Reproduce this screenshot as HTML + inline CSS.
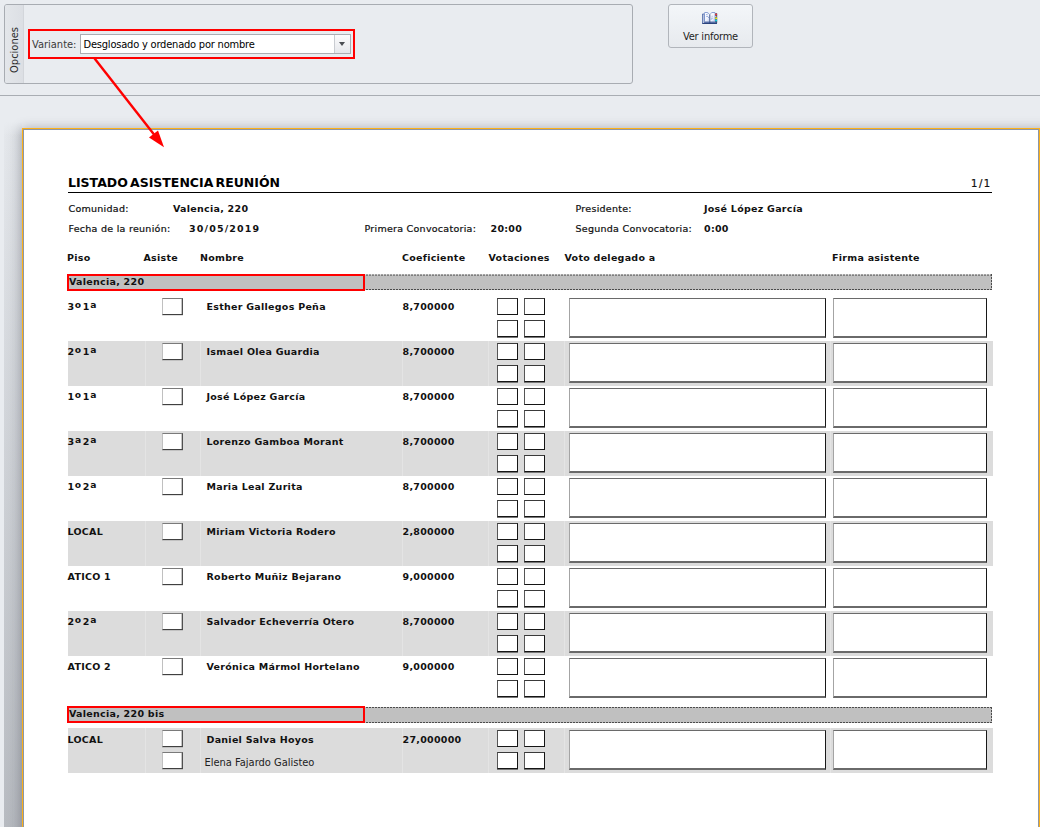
<!DOCTYPE html>
<html lang="es"><head><meta charset="utf-8"><title>Listado asistencia reunión</title>
<style>
html,body{margin:0;padding:0}
body{width:1040px;height:827px;overflow:hidden;position:relative;background:#e9ecf0;font-family:"DejaVu Sans Condensed","Liberation Sans",sans-serif;font-size:11px;color:#1e1e1e}
.abs{position:absolute}
#panel{left:4px;top:4px;width:627px;height:78px;border:1px solid #a8acb2;border-radius:3px;background:#e9ecf0}
#tab{left:0;top:0;width:18px;height:78px;border-right:1px solid #d3d6db;background:linear-gradient(90deg,#e3e6ea,#dcdfe4);border-radius:2px 0 0 2px}
#tabtxt{left:-16px;top:38px;width:52px;height:14px;line-height:14px;text-align:center;transform:rotate(-90deg);font-size:11px;color:#2a2a2a;white-space:nowrap}
#redbox{left:28px;top:29px;width:323px;height:26px;border:2px solid #ff0000}
#lbl{left:32px;top:37.6px;line-height:14px;white-space:nowrap;color:#3a3a3a}
#combo{left:80px;top:34px;width:269px;height:18px;border:1px solid #abadb3;background:#fff}
#combotxt{left:2.5px;top:2.6px;line-height:14px;white-space:nowrap;color:#000;letter-spacing:-0.2px}
#ddbtn{right:0;top:0;width:15px;height:18px;border-left:1px solid #c9ccd1;background:linear-gradient(#fbfbfc,#e6e8ec)}
#ddarr{left:4px;top:7px;width:0;height:0;border-left:3.5px solid transparent;border-right:3.5px solid transparent;border-top:4px solid #4a4d52}
#btn{left:668px;top:4px;width:83px;height:42px;border:1px solid #b1b5bb;border-radius:3px;background:linear-gradient(#f3f6f9,#e7eaee)}
#btntxt{left:0;width:83px;top:24.8px;text-align:center;line-height:14px;white-space:nowrap;letter-spacing:-0.22px}
#sep{left:0;top:95px;width:1040px;height:1px;background:#a9adb3}
#shl{left:4px;top:122px;width:18px;height:706px;background:linear-gradient(180deg,rgba(60,65,75,0) 0,rgba(60,65,75,0) 6px,rgba(60,65,75,.27) 100%),linear-gradient(180deg,rgba(233,236,240,1) 0,rgba(233,236,240,0) 14px),linear-gradient(90deg,rgba(60,65,75,.02),rgba(60,65,75,.10))}
#sht{left:22px;top:128px;width:1030px;height:720px;box-shadow:0 0 10px 0 rgba(60,65,75,.36)}
#page{left:22px;top:128px;width:1016px;height:720px;border:1px solid #fbb01a;background:#fff;overflow:hidden}
#page2{left:0;top:0;right:0;bottom:0;border:1px solid #8d97a6;border-bottom:none}
.v{font-family:"DejaVu Sans","Liberation Sans",sans-serif;font-size:9.5px;letter-spacing:.27px;line-height:12px;white-space:nowrap;color:#111;position:absolute}
.v:not(.b){-webkit-text-stroke:0.22px #111}
.b{font-weight:bold}
.o{display:inline-block;height:6.45px;overflow:hidden;vertical-align:top;line-height:12px;position:relative;top:1px;font-size:12.2px;letter-spacing:0;margin-right:-2.1px}
.row{position:absolute;left:44px;width:925px;height:45px}
.row.sh{background:#dcdcdc}
.sepv{position:absolute;top:0;bottom:0;width:1px;background:#e4e4e4}
.cb{position:absolute;width:19px;height:15px;background:#fff;border:1px solid;border-color:#7a7a7a #505050 #404040 #c0c0c0;box-shadow:inset -1px 0 0 #c4c4c4,0 1px 0 rgba(0,0,0,.12)}
.vb{position:absolute;width:19px;height:15px;background:#fff;border:1px solid;border-color:#3a3a3a #151515 #151515 #555}
.vb.lo{box-shadow:0 1px 0 #777}
.bb{position:absolute;height:37px;background:#fff;border:1px solid;border-color:#6a6a6a #181818 #6a6a6a #a4a4a4;border-bottom-width:2px}
.grp{position:absolute;width:925px;height:16px;background:#c0c0c0}
.grp.soft{background:linear-gradient(#e2e2e2 0,#e2e2e2 1px,#c0c0c0 1px)}
.grp i{position:absolute;left:0;right:0;height:1px;background:linear-gradient(90deg,#4c4c4c 0,#4c4c4c 1.7px,transparent 1.7px,transparent 3px) -1px 0/3px 1px repeat-x}
.grp i.l1{background-image:linear-gradient(90deg,#a2a2a2 0,#a2a2a2 1.7px,transparent 1.7px,transparent 3px)}
.grp i.l2{background-image:linear-gradient(90deg,#808080 0,#808080 1.7px,transparent 1.7px,transparent 3px)}
.grp b{position:absolute;right:0;top:0;bottom:0;width:1px;background:linear-gradient(180deg,#4c4c4c 0,#4c4c4c 1.7px,transparent 1.7px,transparent 3px) 0 0/1px 3px repeat-y}
.red{position:absolute;width:294px;height:13px;border:2px solid #ff0000}
</style></head><body>
<div id="panel" class="abs"><div id="tab" class="abs"></div><div id="tabtxt" class="abs">Opciones</div></div>
<div id="lbl" class="abs">Variante:</div>
<div id="combo" class="abs"><div id="combotxt" class="abs">Desglosado y ordenado por nombre</div><div id="ddbtn" class="abs"><div id="ddarr" class="abs"></div></div></div>
<div id="redbox" class="abs"></div>
<div id="btn" class="abs">
<svg class="abs" style="left:33px;top:7px" width="16" height="13" viewBox="0 0 16 13">
<defs><linearGradient id="pg" x1="0" y1="0" x2="1" y2="1"><stop offset="0" stop-color="#ffffff"/><stop offset="0.55" stop-color="#f2f5fd"/><stop offset="1" stop-color="#bccbf0"/></linearGradient></defs>
<path d="M0.5 2 H2 V10.4 H13.4 V2 H14.6 V11.4 H0.5 Z" fill="#ffffff" stroke="#4562a3" stroke-width="0.8"/>
<rect x="13.2" y="1.3" width="1.9" height="9.4" fill="#2f3f63"/>
<path d="M2.7 9.6 V0.6 H5.6 L7.4 2.2" fill="none" stroke="#6482c6" stroke-width="0.8"/>
<path d="M3.1 1 H5.5 L7.3 2.5 V9.8 H3.1 Z" fill="url(#pg)"/>
<path d="M12.9 9.6 V0.6 H10 L8.2 2.2" fill="none" stroke="#6482c6" stroke-width="0.8"/>
<path d="M12.5 1 H10.1 L8.3 2.5 V9.8 H12.5 Z" fill="url(#pg)"/>
<path d="M7.8 2.4 V11.4" stroke="#27427e" stroke-width="0.9"/>
<path d="M2.9 10 H12.8" stroke="#3a5596" stroke-width="0.8"/>
<path d="M0.3 11.4 H15" stroke="#223b76" stroke-width="1"/>
<path d="M4.2 2.6 L5.8 2 M4.2 4.4 L6 4.4 M6 5.4 L7 5.4 M9.6 4.3 L10.6 4.3 M9 6.2 L10.8 6.2 M8.8 7.6 L9.6 7.6" stroke="#7c98d8" stroke-width="0.8"/>
<rect x="13.2" y="1.7" width="1.9" height="1.7" fill="#f03a3a"/><rect x="13.2" y="3.9" width="1.2" height="1" fill="#e8ecf4"/><rect x="13.2" y="5.4" width="1.9" height="1.8" fill="#f2ee10"/><rect x="13.2" y="7.5" width="1.9" height="1.9" fill="#18d0e0"/>
</svg>
<div id="btntxt" class="abs">Ver informe</div></div>
<div id="sep" class="abs"></div>
<div id="shl" class="abs"></div><div id="sht" class="abs"></div>
<div id="page" class="abs"><div id="page2" class="abs">

<div class="v b" style="left:44px;top:44.5px;font-size:12.5px;letter-spacing:0;word-spacing:-2.2px;line-height:15px;color:#000">LISTADO ASISTENCIA REUNIÓN</div>
<div class="v" style="left:917.7px;width:50px;text-align:right;top:47.5px;letter-spacing:1.5px;font-size:10px">1/1</div>
<div class="abs" style="left:44px;top:61.5px;width:924px;height:1px;background:#000"></div>
<div class="v" style="left:44.5px;top:73.0px;">Comunidad:</div>
<div class="v b" style="left:149.0px;top:73.0px;">Valencia, 220</div>
<div class="v" style="left:551.5px;top:73.0px;">Presidente:</div>
<div class="v b" style="left:680.0px;top:73.0px;">José López García</div>
<div class="v" style="left:44.5px;top:93.0px;">Fecha de la reunión:</div>
<div class="v b" style="left:165.0px;top:93.0px;letter-spacing:1.15px;">30/05/2019</div>
<div class="v" style="left:340.5px;top:93.0px;">Primera Convocatoria:</div>
<div class="v b" style="left:466.5px;top:93.0px;">20:00</div>
<div class="v" style="left:551.5px;top:93.0px;">Segunda Convocatoria:</div>
<div class="v b" style="left:680.0px;top:93.0px;">0:00</div>
<div class="v b" style="left:43.0px;top:122.0px;">Piso</div>
<div class="v b" style="left:119.5px;top:122.0px;">Asiste</div>
<div class="v b" style="left:176.0px;top:122.0px;">Nombre</div>
<div class="v b" style="left:378.0px;top:122.0px;">Coeficiente</div>
<div class="v b" style="left:464.5px;top:122.0px;">Votaciones</div>
<div class="v b" style="left:540.5px;top:122.0px;">Voto delegado a</div>
<div class="v b" style="left:808.0px;top:122.0px;">Firma asistente</div>
<div class="grp soft" style="top:144px;left:43px"><i class="l1" style="top:0"></i><i class="l2" style="top:1px"></i><i style="bottom:0"></i><b></b></div>
<div class="v b" style="left:45.0px;top:145.8px;">Valencia, 220</div>
<div class="red" style="top:144px;left:43px"></div>
<div class="row" style="top:166px;left:43.5px;height:45px">
</div>
<div class="v b" style="left:43.5px;top:171.0px;">3<span class="o">º</span> 1<span class="o">ª</span></div>
<div class="v b" style="left:182.5px;top:171.0px;">Esther Gallegos Peña</div>
<div class="v b" style="left:378.5px;top:171.0px;">8,700000</div>
<div class="cb" style="left:138px;top:168px"></div>
<div class="vb" style="left:473px;top:168px"></div>
<div class="vb lo" style="left:473px;top:190px"></div>
<div class="vb" style="left:500px;top:168px"></div>
<div class="vb lo" style="left:500px;top:190px"></div>
<div class="bb" style="left:545px;top:168px;width:255px"></div>
<div class="bb" style="left:809px;top:168px;width:152px"></div>
<div class="row sh" style="top:211px;left:43.5px;height:45px">
<div class="sepv" style="left:77.0px"></div>
<div class="sepv" style="left:132.5px"></div>
<div class="sepv" style="left:334.0px"></div>
<div class="sepv" style="left:420.5px"></div>
<div class="sepv" style="left:496.5px"></div>
<div class="sepv" style="left:762.5px"></div>
</div>
<div class="v b" style="left:43.5px;top:216.0px;">2<span class="o">º</span> 1<span class="o">ª</span></div>
<div class="v b" style="left:182.5px;top:216.0px;">Ismael Olea Guardia</div>
<div class="v b" style="left:378.5px;top:216.0px;">8,700000</div>
<div class="cb" style="left:138px;top:213px"></div>
<div class="vb" style="left:473px;top:213px"></div>
<div class="vb lo" style="left:473px;top:235px"></div>
<div class="vb" style="left:500px;top:213px"></div>
<div class="vb lo" style="left:500px;top:235px"></div>
<div class="bb" style="left:545px;top:213px;width:255px"></div>
<div class="bb" style="left:809px;top:213px;width:152px"></div>
<div class="row" style="top:256px;left:43.5px;height:45px">
</div>
<div class="v b" style="left:43.5px;top:261.0px;">1<span class="o">º</span> 1<span class="o">ª</span></div>
<div class="v b" style="left:182.5px;top:261.0px;">José López García</div>
<div class="v b" style="left:378.5px;top:261.0px;">8,700000</div>
<div class="cb" style="left:138px;top:258px"></div>
<div class="vb" style="left:473px;top:258px"></div>
<div class="vb lo" style="left:473px;top:280px"></div>
<div class="vb" style="left:500px;top:258px"></div>
<div class="vb lo" style="left:500px;top:280px"></div>
<div class="bb" style="left:545px;top:258px;width:255px"></div>
<div class="bb" style="left:809px;top:258px;width:152px"></div>
<div class="row sh" style="top:301px;left:43.5px;height:45px">
<div class="sepv" style="left:77.0px"></div>
<div class="sepv" style="left:132.5px"></div>
<div class="sepv" style="left:334.0px"></div>
<div class="sepv" style="left:420.5px"></div>
<div class="sepv" style="left:496.5px"></div>
<div class="sepv" style="left:762.5px"></div>
</div>
<div class="v b" style="left:43.5px;top:306.0px;">3<span class="o">ª</span> 2<span class="o">ª</span></div>
<div class="v b" style="left:182.5px;top:306.0px;">Lorenzo Gamboa Morant</div>
<div class="v b" style="left:378.5px;top:306.0px;">8,700000</div>
<div class="cb" style="left:138px;top:303px"></div>
<div class="vb" style="left:473px;top:303px"></div>
<div class="vb lo" style="left:473px;top:325px"></div>
<div class="vb" style="left:500px;top:303px"></div>
<div class="vb lo" style="left:500px;top:325px"></div>
<div class="bb" style="left:545px;top:303px;width:255px"></div>
<div class="bb" style="left:809px;top:303px;width:152px"></div>
<div class="row" style="top:346px;left:43.5px;height:45px">
</div>
<div class="v b" style="left:43.5px;top:351.0px;">1<span class="o">º</span> 2<span class="o">ª</span></div>
<div class="v b" style="left:182.5px;top:351.0px;">Maria Leal Zurita</div>
<div class="v b" style="left:378.5px;top:351.0px;">8,700000</div>
<div class="cb" style="left:138px;top:348px"></div>
<div class="vb" style="left:473px;top:348px"></div>
<div class="vb lo" style="left:473px;top:370px"></div>
<div class="vb" style="left:500px;top:348px"></div>
<div class="vb lo" style="left:500px;top:370px"></div>
<div class="bb" style="left:545px;top:348px;width:255px"></div>
<div class="bb" style="left:809px;top:348px;width:152px"></div>
<div class="row sh" style="top:391px;left:43.5px;height:45px">
<div class="sepv" style="left:77.0px"></div>
<div class="sepv" style="left:132.5px"></div>
<div class="sepv" style="left:334.0px"></div>
<div class="sepv" style="left:420.5px"></div>
<div class="sepv" style="left:496.5px"></div>
<div class="sepv" style="left:762.5px"></div>
</div>
<div class="v b" style="left:43.5px;top:396.0px;">LOCAL</div>
<div class="v b" style="left:182.5px;top:396.0px;">Miriam Victoria Rodero</div>
<div class="v b" style="left:378.5px;top:396.0px;">2,800000</div>
<div class="cb" style="left:138px;top:393px"></div>
<div class="vb" style="left:473px;top:393px"></div>
<div class="vb lo" style="left:473px;top:415px"></div>
<div class="vb" style="left:500px;top:393px"></div>
<div class="vb lo" style="left:500px;top:415px"></div>
<div class="bb" style="left:545px;top:393px;width:255px"></div>
<div class="bb" style="left:809px;top:393px;width:152px"></div>
<div class="row" style="top:436px;left:43.5px;height:45px">
</div>
<div class="v b" style="left:43.5px;top:441.0px;">ATICO 1</div>
<div class="v b" style="left:182.5px;top:441.0px;">Roberto Muñiz Bejarano</div>
<div class="v b" style="left:378.5px;top:441.0px;">9,000000</div>
<div class="cb" style="left:138px;top:438px"></div>
<div class="vb" style="left:473px;top:438px"></div>
<div class="vb lo" style="left:473px;top:460px"></div>
<div class="vb" style="left:500px;top:438px"></div>
<div class="vb lo" style="left:500px;top:460px"></div>
<div class="bb" style="left:545px;top:438px;width:255px"></div>
<div class="bb" style="left:809px;top:438px;width:152px"></div>
<div class="row sh" style="top:481px;left:43.5px;height:45px">
<div class="sepv" style="left:77.0px"></div>
<div class="sepv" style="left:132.5px"></div>
<div class="sepv" style="left:334.0px"></div>
<div class="sepv" style="left:420.5px"></div>
<div class="sepv" style="left:496.5px"></div>
<div class="sepv" style="left:762.5px"></div>
</div>
<div class="v b" style="left:43.5px;top:486.0px;">2<span class="o">º</span> 2<span class="o">ª</span></div>
<div class="v b" style="left:182.5px;top:486.0px;">Salvador Echeverría Otero</div>
<div class="v b" style="left:378.5px;top:486.0px;">8,700000</div>
<div class="cb" style="left:138px;top:483px"></div>
<div class="vb" style="left:473px;top:483px"></div>
<div class="vb lo" style="left:473px;top:505px"></div>
<div class="vb" style="left:500px;top:483px"></div>
<div class="vb lo" style="left:500px;top:505px"></div>
<div class="bb" style="left:545px;top:483px;width:255px"></div>
<div class="bb" style="left:809px;top:483px;width:152px"></div>
<div class="row" style="top:526px;left:43.5px;height:45px">
</div>
<div class="v b" style="left:43.5px;top:531.0px;">ATICO 2</div>
<div class="v b" style="left:182.5px;top:531.0px;">Verónica Mármol Hortelano</div>
<div class="v b" style="left:378.5px;top:531.0px;">9,000000</div>
<div class="cb" style="left:138px;top:528px"></div>
<div class="vb" style="left:473px;top:528px"></div>
<div class="vb lo" style="left:473px;top:550px"></div>
<div class="vb" style="left:500px;top:528px"></div>
<div class="vb lo" style="left:500px;top:550px"></div>
<div class="bb" style="left:545px;top:528px;width:255px"></div>
<div class="bb" style="left:809px;top:528px;width:152px"></div>
<div class="grp" style="top:577px;left:43px"><i style="top:0"></i><i style="bottom:0"></i><b></b></div>
<div class="v b" style="left:45.0px;top:577.8px;">Valencia, 220 bis</div>
<div class="red" style="top:576px;left:43px"></div>
<div class="row sh" style="top:598px;left:43.5px;height:45px">
<div class="sepv" style="left:77.0px"></div>
<div class="sepv" style="left:132.5px"></div>
<div class="sepv" style="left:334.0px"></div>
<div class="sepv" style="left:420.5px"></div>
<div class="sepv" style="left:496.5px"></div>
<div class="sepv" style="left:762.5px"></div>
</div>
<div class="v b" style="left:43.5px;top:603.8px;">LOCAL</div>
<div class="v b" style="left:182.5px;top:603.8px;">Daniel Salva Hoyos</div>
<div class="v b" style="left:378.5px;top:603.8px;">27,000000</div>
<div class="cb" style="left:138px;top:600px"></div>
<div class="cb" style="left:138px;top:622px"></div>
<div class="abs" style="left:180.5px;top:626px;font-size:11px;line-height:14px;white-space:nowrap;color:#222">Elena Fajardo Galisteo</div>
<div class="vb" style="left:473px;top:600px"></div>
<div class="vb lo" style="left:473px;top:622px"></div>
<div class="vb" style="left:500px;top:600px"></div>
<div class="vb lo" style="left:500px;top:622px"></div>
<div class="bb" style="left:545px;top:600px;width:255px"></div>
<div class="bb" style="left:809px;top:600px;width:152px"></div>
</div></div>
<svg class="abs" style="left:0;top:0;pointer-events:none" width="1040" height="200" viewBox="0 0 1040 200">
<line x1="94.6" y1="58.6" x2="156" y2="137" stroke="#ff0000" stroke-width="2.4"/>
<polygon points="164,147.2 149,137.6 158,130.4" fill="#ff0000"/>
</svg>
</body></html>
